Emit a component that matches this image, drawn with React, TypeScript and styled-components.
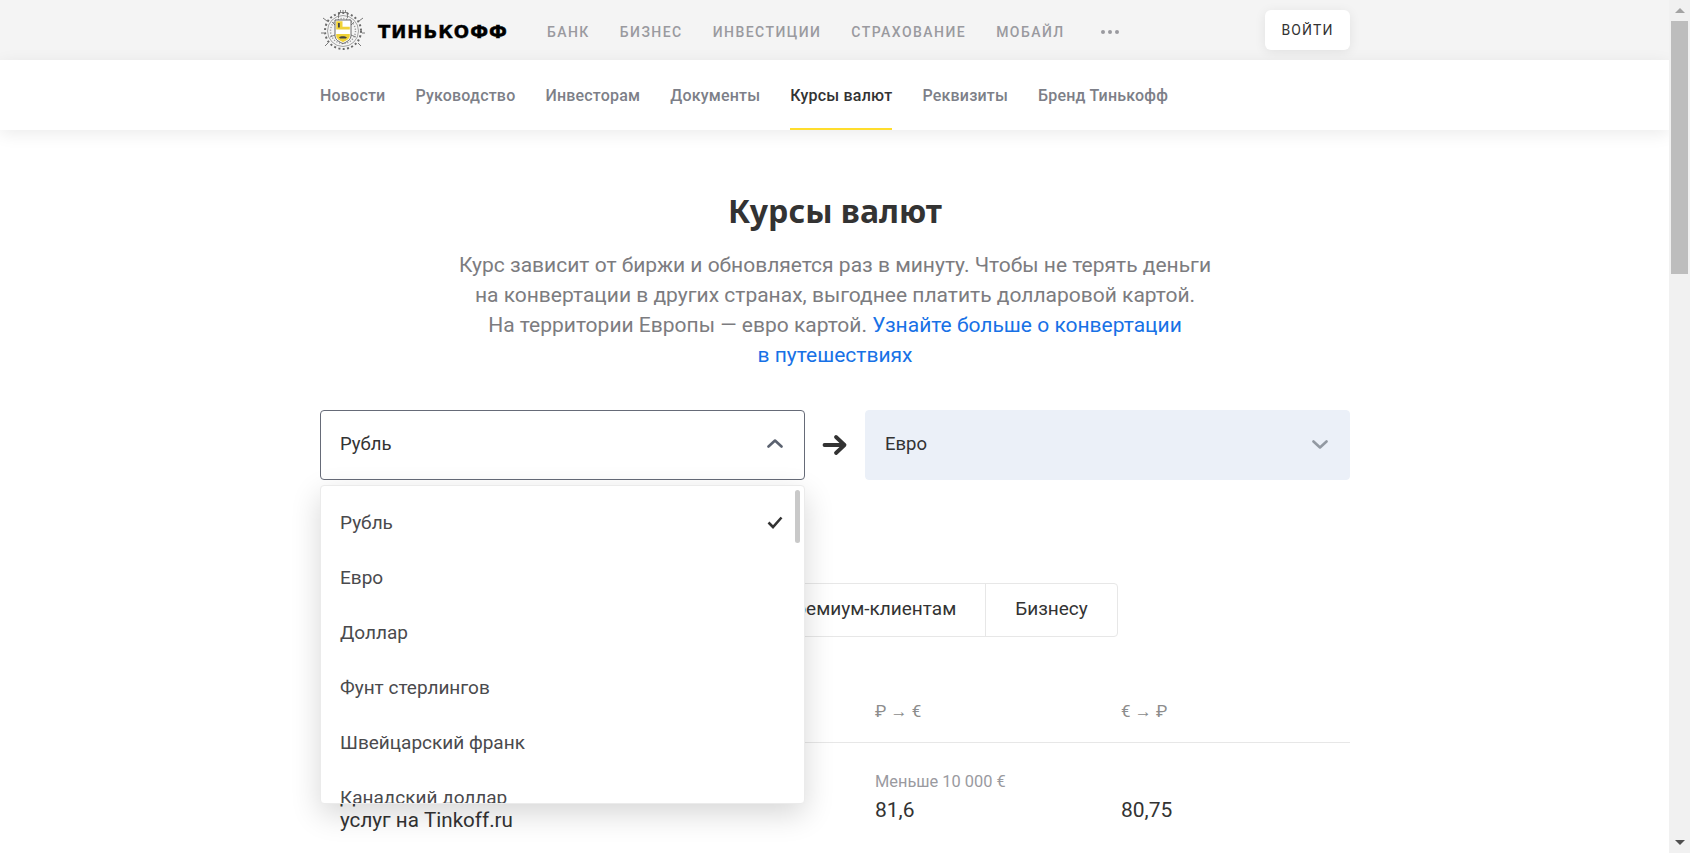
import React from 'react';
import styled, { createGlobalStyle } from 'styled-components';

const GlobalStyle = createGlobalStyle`
    html, body {
        margin: 0;
        padding: 0;
        height: 100%;
        overflow: hidden;
        background: #fff;
        font-family: Roboto, "Liberation Sans", sans-serif;
    }
    * {
        box-sizing: border-box;
    }
`;

const Layout = styled.div`
    display: flex;
    width: 100%;
    height: 100vh;
    overflow: hidden;
`;
const Page = styled.div`
    flex: 1;
    min-width: 0;
    overflow: hidden;
`;
const Container = styled.div`
    width: 1030px;
    margin-left: 320px;
`;

const TopBar = styled.header`
    height: 60px;
    background: #f4f4f4;
`;
const TopBarInner = styled(Container)`
    height: 100%;
    display: flex;
    align-items: center;
`;
const Logo = styled.a`
    display: flex;
    align-items: center;
    width: 227px;
    flex: none;
`;
const Wordmark = styled.span`
    margin-left: 12px;
    font-family: "DejaVu Sans", sans-serif;
    font-weight: 700;
    font-size: 18px;
    letter-spacing: 1px;
    color: #000;
    -webkit-text-stroke: 0.4px #000;
    transform: translateY(1px);
`;
const TopNav = styled.nav`
    display: flex;
    align-items: center;
    gap: 30px;
    flex: 1;
    transform: translateY(2px);
`;
const TopLink = styled.a`
    font-size: 14px;
    font-weight: 500;
    letter-spacing: 1.45px;
    color: #9a9a9f;
`;
const MoreDots = styled.span`
    display: flex;
    gap: 3px;
    margin-left: 6px;
    i {
        width: 4px;
        height: 4px;
        border-radius: 50%;
        background: #9a9a9f;
    }
`;
const LoginButton = styled.button`
    width: 85px;
    height: 40px;
    border: 0;
    border-radius: 6px;
    background: #fff;
    box-shadow: 0 2px 12px rgba(0, 0, 0, 0.08);
    font-family: inherit;
    font-size: 14px;
    letter-spacing: 1.1px;
    color: #333;
`;

const SubBar = styled.div`
    position: relative;
    height: 70px;
    background: #fff;
    box-shadow: 0 4px 16px rgba(0, 0, 0, 0.08);
`;
const SubNav = styled(Container)`
    height: 100%;
    display: flex;
    gap: 30px;
`;
const SubLink = styled.a<{ $active?: boolean }>`
    display: flex;
    align-items: center;
    height: 100%;
    font-size: 16px;
    font-weight: 500;
    letter-spacing: 0.2px;
    color: ${(props) => (props.$active ? '#333' : '#7d7f88')};
    border-bottom: 2px solid ${(props) => (props.$active ? '#ffdd2d' : 'transparent')};
    padding-top: 2px;
`;

const Title = styled.h1`
    margin: 61px 0 19px;
    font-family: "Noto Sans", sans-serif;
    font-size: 32px;
    line-height: 40px;
    font-weight: 700;
    color: #333;
    text-align: center;
`;
const Lead = styled.p`
    margin: 0 0 40px;
    font-size: 21px;
    line-height: 30px;
    color: #7c7c80;
    text-align: center;
    a {
        color: #1771e6;
    }
`;

const Selectors = styled.div`
    display: flex;
    align-items: center;
    justify-content: space-between;
`;
const SelectWrap = styled.div`
    position: relative;
    width: 485px;
`;
const SelectBox = styled.div<{ $open?: boolean }>`
    display: flex;
    align-items: center;
    justify-content: space-between;
    height: 70px;
    padding: 0 21px 2px 19px;
    border-radius: 4px;
    border: 1px solid ${(props) => (props.$open ? '#666b78' : '#ebf0f8')};
    background: ${(props) => (props.$open ? '#fff' : '#ebf0f8')};
    font-size: 18.500px;
    color: #333;
`;
const Dropdown = styled.div`
    position: absolute;
    top: 75px;
    left: 0;
    right: 0;
    height: 319px;
    padding-top: 9px;
    overflow: hidden;
    background: #fff;
    border: 1px solid #ebebeb;
    border-radius: 4px;
    box-shadow: 0 10px 30px rgba(0, 0, 0, 0.16);
    z-index: 5;
`;
const Option = styled.div`
    display: flex;
    align-items: center;
    justify-content: space-between;
    height: 55px;
    padding: 0 21px 0 19px;
    font-size: 19px;
    color: #4a4a4d;
`;
const DropdownThumb = styled.span`
    position: absolute;
    top: 4px;
    right: 4px;
    width: 5px;
    height: 53px;
    border-radius: 3px;
    background: #c9c9c9;
`;

const Tabs = styled.div`
    display: inline-flex;
    margin-top: 103px;
    height: 54px;
    border: 1px solid #e7e7e7;
    border-radius: 4px;
    vertical-align: top;
`;
const Tab = styled.div`
    display: flex;
    align-items: center;
    padding: 0 29px 3px;
    font-size: 19px;
    color: #333;
    & + & {
        border-left: 1px solid #e7e7e7;
    }
`;

const TableHead = styled.div`
    display: grid;
    grid-template-columns: 535px 246px 1fr;
    margin-top: 62px;
    padding: 0 0 19px 20px;
    border-bottom: 1px solid #e7e7e7;
    font-size: 17px;
    line-height: 24px;
    color: #8c8c8c;
`;
const TableRow = styled.div`
    display: grid;
    grid-template-columns: 535px 246px 1fr;
    padding-left: 20px;
`;
const RowName = styled.div`
    padding-top: 41px;
    font-size: 20.600px;
    line-height: 24px;
    color: #333;
`;
const RateCell = styled.div`
    padding-top: 29px;
`;
const RateNote = styled.div`
    height: 20px;
    font-size: 16.400px;
    line-height: 20px;
    color: #9a9a9f;
`;
const RateValue = styled.div`
    margin-top: 3px;
    font-size: 21px;
    line-height: 30px;
    color: #333;
`;

const Scrollbar = styled.div`
    flex: none;
    width: 21px;
    height: 100%;
    padding: 0 2px;
    display: flex;
    flex-direction: column;
    background: #f1f1f1;
`;
const ScrollArrow = styled.div<{ $down?: boolean }>`
    flex: none;
    height: 21px;
    display: flex;
    align-items: center;
    justify-content: center;
    &::before {
        content: '';
        border-left: 5px solid transparent;
        border-right: 5px solid transparent;
        ${(props) => (props.$down ? 'border-top: 5px solid #505050' : 'border-bottom: 5px solid #a3a3a3')};
    }
`;
const ScrollThumb = styled.div`
    height: 253px;
    background: #bdbdbd;
`;
const ScrollRest = styled.div`
    flex: 1;
`;

const Emblem = () => (
    <svg width="46" height="42" viewBox="0 0 46 42">
        <g fill="none" stroke="#6b6b6b">
            <circle cx="23" cy="22" r="18" strokeWidth="2" strokeDasharray="2 2.400" />
            <circle cx="23" cy="22" r="15.500" strokeWidth="0.6" />
            <circle cx="23" cy="22" r="12.500" strokeWidth="1.400" strokeDasharray="1.200 1.600" stroke="#9a9a9a" />
            <path d="M18.500 9V3.500h9V9M20.500 3.500V1M23 3.500V1M25.500 3.500V1" strokeWidth="0.8" />
            <path d="M7 12L3 9M39 12l4-3M4 24H1M42 24h3M8 34l-3 3M38 34l3 3" strokeWidth="0.9" />
            <path d="M12 13l4 4M34 13l-4 4M10 28l5-2M36 28l-5-2" strokeWidth="0.8" />
        </g>
        <path d="M15 11h16v15.500c0 4.500-4.500 6.500-8 8-3.500-1.500-8-3.500-8-8z" fill="#fff" stroke="#444" strokeWidth="0.8" />
        <path d="M16.200 12.200h6.300v5.600h7.300v2.700H16.200z" fill="#f0d238" />
        <path d="M16.200 25h13.600v1.800c0 3.200-3.800 5-6.800 6.400-3-1.400-6.800-3.200-6.800-6.400z" fill="#f0d238" />
        <path d="M18 14h1.800v4.500H18zM19 28.500c1.500-1.800 6-1.800 8 0l-1.200 1h-5.600z" fill="#444" />
    </svg>
);

const ChevronIcon = ({ up, color }: { up?: boolean; color: string }) => (
    <svg width="16" height="10" viewBox="0 0 16 10">
        <path
            d={up ? 'M1.500 7.500L8 1.500l6.500 6' : 'M1.500 2.500L8 8.500l6.500-6'}
            fill="none"
            stroke={color}
            strokeWidth="2.600"
            strokeLinecap="round"
            strokeLinejoin="round"
        />
    </svg>
);

const ArrowIcon = () => (
    <svg width="26" height="22" viewBox="0 0 26 22">
        <path
            d="M2.500 11h20M14 3l8.500 8-8.500 8"
            fill="none"
            stroke="#333"
            strokeWidth="3.800"
            strokeLinecap="round"
            strokeLinejoin="round"
        />
    </svg>
);

const CheckIcon = () => (
    <svg width="16" height="13" viewBox="0 0 16 13">
        <path d="M1.500 6.500L6 11l8.500-9.500" fill="none" stroke="#333" strokeWidth="2.600" />
    </svg>
);

const topLinks = ['БАНК', 'БИЗНЕС', 'ИНВЕСТИЦИИ', 'СТРАХОВАНИЕ', 'МОБАЙЛ'];
const subLinks = ['Новости', 'Руководство', 'Инвесторам', 'Документы', 'Курсы валют', 'Реквизиты', 'Бренд Тинькофф'];
const currencies = ['Рубль', 'Евро', 'Доллар', 'Фунт стерлингов', 'Швейцарский франк', 'Канадский доллар'];
const tabs = ['Операции в интернет-банке', 'Кассам', 'Премиум-клиентам', 'Бизнесу'];

const App = () => {
    return (
        <Layout>
            <GlobalStyle />
            <Page>
                <TopBar>
                    <TopBarInner>
                        <Logo>
                            <Emblem />
                            <Wordmark>ТИНЬКОФФ</Wordmark>
                        </Logo>
                        <TopNav>
                            {topLinks.map((link) => (
                                <TopLink key={link}>{link}</TopLink>
                            ))}
                            <MoreDots>
                                <i />
                                <i />
                                <i />
                            </MoreDots>
                        </TopNav>
                        <LoginButton>ВОЙТИ</LoginButton>
                    </TopBarInner>
                </TopBar>
                <SubBar>
                    <SubNav>
                        {subLinks.map((link) => (
                            <SubLink key={link} $active={link === 'Курсы валют'}>
                                {link}
                            </SubLink>
                        ))}
                    </SubNav>
                </SubBar>
                <Container>
                    <Title>Курсы валют</Title>
                    <Lead>
                        Курс зависит от биржи и обновляется раз в минуту. Чтобы не терять деньги
                        <br />
                        на конвертации в других странах, выгоднее платить долларовой картой.
                        <br />
                        На территории Европы — евро картой. <a>Узнайте больше о конвертации</a>
                        <br />
                        <a>в путешествиях</a>
                    </Lead>
                    <Selectors>
                        <SelectWrap>
                            <SelectBox $open>
                                Рубль
                                <ChevronIcon up color="#5b6270" />
                            </SelectBox>
                            <Dropdown>
                                <DropdownThumb />
                                {currencies.map((name) => (
                                    <Option key={name}>
                                        {name}
                                        {name === 'Рубль' && <CheckIcon />}
                                    </Option>
                                ))}
                            </Dropdown>
                        </SelectWrap>
                        <ArrowIcon />
                        <SelectWrap>
                            <SelectBox>
                                Евро
                                <ChevronIcon color="#9299a2" />
                            </SelectBox>
                        </SelectWrap>
                    </Selectors>
                    <Tabs>
                        {tabs.map((tab) => (
                            <Tab key={tab}>{tab}</Tab>
                        ))}
                    </Tabs>
                    <TableHead>
                        <span>Категория</span>
                        <span>₽ → €</span>
                        <span>€ → ₽</span>
                    </TableHead>
                    <TableRow>
                        <RowName>
                            Для оплаты
                            <br />
                            услуг на Tinkoff.ru
                        </RowName>
                        <RateCell>
                            <RateNote>Меньше 10 000 €</RateNote>
                            <RateValue>81,6</RateValue>
                        </RateCell>
                        <RateCell>
                            <RateNote />
                            <RateValue>80,75</RateValue>
                        </RateCell>
                    </TableRow>
                </Container>
            </Page>
            <Scrollbar>
                <ScrollArrow />
                <ScrollThumb />
                <ScrollRest />
                <ScrollArrow $down />
            </Scrollbar>
        </Layout>
    );
};

export default App;
